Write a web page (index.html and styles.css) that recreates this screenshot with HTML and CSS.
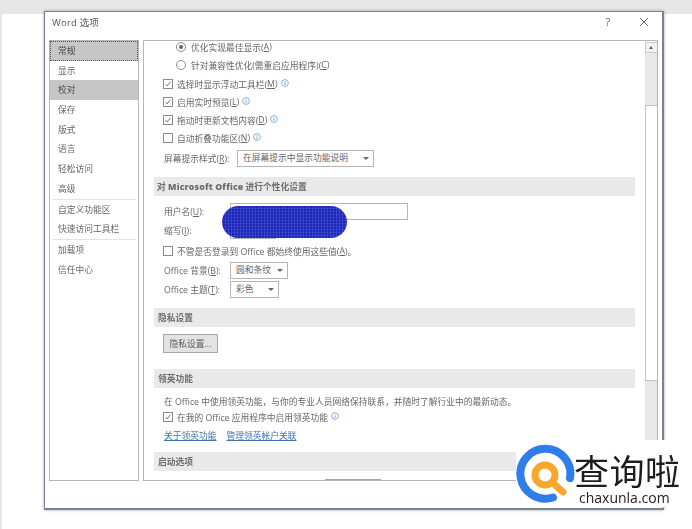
FILE: index.html
```html
<!DOCTYPE html>
<html lang="zh-CN">
<head>
<meta charset="utf-8">
<title>Word 选项</title>
<link rel="stylesheet" href="styles.css">
</head>
<body>
<svg class="defs" width="0" height="0" aria-hidden="true">
  <symbol id="tick" viewBox="0 0 11 11"><path d="M2.2 5.6 4.4 8.2 8.8 2.4" fill="none" stroke="#555" stroke-width="1.1"/></symbol>
  <symbol id="info" viewBox="0 0 8 8"><circle cx="4" cy="4" r="3.4" fill="none" stroke="#6d9bdc" stroke-width=".8"/><path d="M4 3.4V6M4 2v.8" stroke="#4f86d2" stroke-width=".8"/></symbol>
</svg>
<div class="topband"></div>
<main class="dialog">
  <header class="titlebar">
    <span class="title">Word 选项</span>
    <span class="help">?</span>
    <svg class="close" width="10" height="10" viewBox="0 0 10 10"><path d="M1 1l8 8M9 1l-8 8" stroke="#666" stroke-width="1"/></svg>
  </header>
  <div class="body">
    <nav class="side">
      <div class="item selected">常规</div>
      <div class="item">显示</div>
      <div class="item current">校对</div>
      <div class="item">保存</div>
      <div class="item">版式</div>
      <div class="item">语言</div>
      <div class="item">轻松访问</div>
      <div class="item">高级</div>
      <div class="sep"></div>
      <div class="item">自定义功能区</div>
      <div class="item">快速访问工具栏</div>
      <div class="sep"></div>
      <div class="item">加载项</div>
      <div class="item">信任中心</div>
    </nav>
    <section class="panel">
      <div class="content">
        <div class="row radio-row"><span class="radio on"></span>优化实现最佳显示(<u>A</u>)</div>
        <div class="row radio-row"><span class="radio"></span>针对兼容性优化(需重启应用程序)(<u>C</u>)</div>
        <div class="row first-check"><span class="check"><svg><use href="#tick"/></svg></span>选择时显示浮动工具栏(<u>M</u>)<svg class="info"><use href="#info"/></svg></div>
        <div class="row"><span class="check"><svg><use href="#tick"/></svg></span>启用实时预览(<u>L</u>)<svg class="info"><use href="#info"/></svg></div>
        <div class="row"><span class="check"><svg><use href="#tick"/></svg></span>拖动时更新文档内容(<u>D</u>)<svg class="info"><use href="#info"/></svg></div>
        <div class="row"><span class="check"></span>自动折叠功能区(<u>N</u>)<svg class="info"><use href="#info"/></svg></div>
        <div class="row screentip"><span class="label-tip">屏幕提示样式(<u>R</u>):</span><span class="combo combo-tip">在屏幕提示中显示功能说明<i class="caret"></i></span></div>
        <h2 class="head head-ms">对 <b class="wide">Microsoft Office</b> 进行个性化设置</h2>
        <div class="field user"><span class="label">用户名(<u>U</u>):</span><span class="input input-user"></span></div>
        <div class="field initials"><span class="label">缩写(<u>I</u>):</span><span class="input input-short"></span></div>
        <div class="row always"><span class="check"></span>不管是否登录到 Office 都始终使用这些值(<u>A</u>)。</div>
        <div class="field pick"><span class="label">Office 背景(<u>B</u>):</span><span class="combo combo-bg">圆和条纹<i class="caret"></i></span></div>
        <div class="field pick"><span class="label">Office 主题(<u>T</u>):</span><span class="combo combo-theme">彩色<i class="caret"></i></span></div>
        <h2 class="head head-privacy">隐私设置</h2>
        <button class="btn" type="button">隐私设置...</button>
        <h2 class="head head-linkedin">领英功能</h2>
        <div class="line para">在 Office 中使用领英功能，与你的专业人员网络保持联系，并随时了解行业中的最新动态。</div>
        <div class="line linked"><span class="check"><svg><use href="#tick"/></svg></span>在我的 Office 应用程序中启用领英功能<svg class="info"><use href="#info"/></svg></div>
        <div class="line links"><a>关于领英功能</a><a>管理领英帐户关联</a></div>
        <h2 class="head head-start">启动选项</h2>
        <div class="cut-btn"></div>
      </div>
      <div class="scrollbar">
        <div class="arrow"><i></i></div>
        <div class="track-a"></div>
        <div class="thumb"></div>
        <div class="track-b"></div>
      </div>
    </section>
  </div>
</main>
<div class="blob"></div>
<aside class="logo">
  <svg class="logo-mark" width="62" height="62" viewBox="0 0 62 62">
    <path d="M37 54.500A25 25 0 1 1 54 35" fill="none" stroke="#2e7de9" stroke-width="8" stroke-linecap="round"/>
    <circle cx="29" cy="32" r="10" fill="none" stroke="#f9a62b" stroke-width="7"/>
    <path d="M38 41l9 8" stroke="#f9a62b" stroke-width="7" stroke-linecap="round"/>
  </svg>
  <div class="logo-text">
    <div class="logo-cn">查询啦</div>
    <div class="logo-en">chaxunla.com</div>
  </div>
</aside>
</body>
</html>
```
FILE: styles.css
```css
* { box-sizing: border-box; }
html, body { margin: 0; height: 100%; }
body {
  position: relative;
  width: 692px;
  height: 529px;
  overflow: hidden;
  background: #fff;
  border-left: 2px solid #e6e6e6;
  font-family: "Open Sans", "Noto Sans CJK SC", sans-serif;
  font-size: 8.750px;
  color: #666;
}
.defs { position: absolute; }
.topband { height: 14px; margin-left: -2px; background: #e7e7e7; margin-bottom: -3px; }
.dialog {
  width: 620px;
  height: 499px;
  margin-left: 42px;
  background: #fff;
  border: 1px solid #7a8290;
  border-width: 1px 2px 2px 1px;
  box-shadow: 0 0 3px rgba(90, 100, 120, .55);
  filter: blur(.4px);
  position: relative;
}
.titlebar { height: 28px; display: flex; align-items: center; padding: 0 13px 9px 7px; font-size: 9.500px; color: #555; }
.title { flex: 1; letter-spacing: .2px; }
.help { margin-right: 29px; font-size: 10px; }
.body { display: flex; gap: 4px; padding-left: 4px; }
.side { width: 90px; height: 441px; border: 1px solid #b5b5b5; flex: none; }
.item { height: 19.700px; line-height: 19.700px; padding: 1px 0 0 8px; white-space: nowrap; }
.selected { background: #c6c6c6; outline: 1px dotted #555; outline-offset: -1px; color: #4a4a4a; }
.current { background: #c6c6c6; color: #4a4a4a; }
.sep { height: 1px; margin: 0 2px; background: #e3e3e3; }
.panel { position: relative; width: 515px; height: 441px; border: 1px solid #b5b5b5; overflow: hidden; display: flex; flex: none; }
.content { width: 501px; height: 439px; overflow: hidden; padding: 0 0 0 10px; flex: none; }
.row, .field, .line { display: flex; align-items: center; white-space: nowrap; padding-left: 9px; }
.row { height: 18px; }
.content > .row:first-child { margin-top: -3px; }
.radio-row { padding-left: 22px; }
.radio { width: 10px; height: 10px; border: 1px solid #8c8c8c; border-radius: 50%; margin-right: 5px; position: relative; flex: none; }
.radio.on::after { content: ""; position: absolute; left: 2px; top: 2px; width: 4px; height: 4px; border-radius: 50%; background: #666; }
.first-check { margin-top: 1px; }
.check { width: 10px; height: 10px; border: 1px solid #8a8a8a; margin-right: 4px; flex: none; display: block; }
.check svg { width: 8px; height: 8px; display: block; }
.info { width: 8px; height: 8px; margin: -3px 0 0 3px; flex: none; }
.screentip { margin-top: 2px; padding-left: 10px; }
.label-tip { width: 73px; }
.combo { position: relative; height: 17px; line-height: 15px; border: 1px solid #b5b5b5; padding-left: 5px; display: block; background: #fff; }
.combo-tip { width: 137px; }
.combo-bg { width: 58px; }
.combo-theme { width: 49px; }
.caret { position: absolute; right: 4px; top: 6px; border: 3px solid transparent; border-top: 3.500px solid #666; border-bottom: 0; }
.head { height: 19px; line-height: 19px; margin: 0; padding: 1px 0 0 4px; width: 481px; background: #e9e9e9; font-size: 8.750px; font-weight: 700; color: #6e6e6e; }
.head-ms { margin-top: 10px; padding-left: 3px; }
.wide { letter-spacing: .15px; }
.field { height: 17px; margin-top: 2px; padding-left: 10px; }
.user { margin-top: 7px; }
.label { width: 66px; flex: none; }
.input { display: block; height: 17px; border: 1px solid #b5b5b5; }
.input-user { width: 178px; }
.input-short { width: 46px; }
.always { margin-top: 3px; }
.head-privacy { margin-top: 10px; }
.btn { display: block; margin: 7px 0 0 9px; width: 55px; height: 19px; padding: 0; border: 1px solid #a8a8a8; background: #e3e3e3; font: inherit; color: #5a5a5a; }
.head-linkedin { margin-top: 16px; }
.line { height: 16px; }
.para { margin-top: 5px; padding-left: 10px; }
.links { margin-top: 2px; gap: 10px; color: #4272ad; padding-left: 10px; }
.links a { text-decoration: underline; }
.head-start { margin-top: 9px; }
.cut-btn { margin: 8px 0 0 171px; width: 56px; height: 19px; border: 1px solid #a8a8a8; background: #e3e3e3; }
.scrollbar { width: 13px; height: 439px; padding-top: 1px; flex: none; display: flex; flex-direction: column; }
.arrow { height: 11px; border: 1px solid #c9c9c9; background: #f2f2f2; position: relative; flex: none; }
.arrow i { position: absolute; left: 3px; top: 3px; border: 2.500px solid transparent; border-bottom: 3px solid #666; border-top: 0; }
.track-a { height: 52px; background: #e8e8e8; flex: none; }
.thumb { height: 276px; background: #fff; border: 1px solid #c4c4c4; flex: none; }
.track-b { flex: 1; background: #e8e8e8; }
.blob {
  position: absolute;
  left: 220px;
  top: 206px;
  width: 125px;
  height: 32px;
  border-radius: 16px;
  background:
    repeating-linear-gradient(90deg, rgba(70, 85, 230, .45) 0 1px, rgba(20, 25, 150, .35) 1px 3px),
    repeating-linear-gradient(0deg, #2530bd 0 2px, #3b49da 2px 3px);
  filter: blur(.4px);
}
.logo {
  position: absolute;
  left: 514px;
  top: 440px;
  width: 151px;
  height: 68px;
  background: #fff;
  border-radius: 6px 0 6px 0;
  display: flex;
  padding: 3px 0 0 1px;
  color: #222;
}
.logo-mark { flex: none; margin-left: -1px; }
.logo-text { margin-left: -4px; }
.logo-cn { font-family: "Noto Sans CJK SC", sans-serif; font-size: 35px; line-height: 40px; letter-spacing: .5px; color: #1d1d1d; margin-top: 7px; white-space: nowrap; }
.logo-en { font-family: "Open Sans", sans-serif; font-size: 14px; line-height: 16px; padding-left: 5px; white-space: nowrap; color: #222; }
```
